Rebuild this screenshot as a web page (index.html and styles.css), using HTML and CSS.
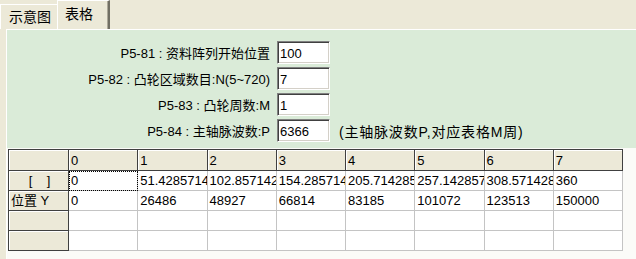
FILE: index.html
```html
<!DOCTYPE html>
<html lang="zh-CN">
<head>
  <meta charset="UTF-8">
  <title>凸轮表格</title>
  <link rel="stylesheet" href="styles.css">
</head>
<body>

  <div class="tabs">
    <div class="tab">示意图</div>
    <div class="tab active">表格</div>
  </div>

  <div class="panel">
    <div class="params">
      <label>P5-81 : 资料阵列开始位置</label>
      <input class="field" type="text" value="100">
      <span></span>

      <label>P5-82 : 凸轮区域数目:N(5~720)</label>
      <input class="field" type="text" value="7">
      <span></span>

      <label>P5-83 : 凸轮周数:M</label>
      <input class="field" type="text" value="1">
      <span></span>

      <label>P5-84 : 主轴脉波数:P</label>
      <input class="field" type="text" value="6366">
      <span class="note">(主轴脉波数P,对应表格M周)</span>
    </div>

    <div class="grid-area">
      <table class="grid">
        <colgroup>
          <col class="fixed-col">
          <col span="8">
        </colgroup>
        <tr class="head">
          <td class="fixed"></td>
          <td class="fixed">0</td>
          <td class="fixed">1</td>
          <td class="fixed">2</td>
          <td class="fixed">3</td>
          <td class="fixed">4</td>
          <td class="fixed">5</td>
          <td class="fixed">6</td>
          <td class="fixed">7</td>
        </tr>
        <tr>
          <td class="fixed center">[&nbsp;&nbsp;&nbsp;&nbsp;]</td>
          <td class="focus">0</td>
          <td>51.4285714</td>
          <td>102.857142</td>
          <td>154.285714</td>
          <td>205.714285</td>
          <td>257.142857</td>
          <td>308.571428</td>
          <td>360</td>
        </tr>
        <tr>
          <td class="fixed">位置 Y</td>
          <td>0</td>
          <td>26486</td>
          <td>48927</td>
          <td>66814</td>
          <td>83185</td>
          <td>101072</td>
          <td>123513</td>
          <td>150000</td>
        </tr>
        <tr>
          <td class="fixed"></td>
          <td></td><td></td><td></td><td></td><td></td><td></td><td></td><td></td>
        </tr>
        <tr>
          <td class="fixed"></td>
          <td></td><td></td><td></td><td></td><td></td><td></td><td></td><td></td>
        </tr>
      </table>
    </div>
  </div>

</body>
</html>
```

FILE: styles.css
```css
body {
  margin: 0;
  height: 259px;
  overflow: hidden;
  background-color: #ece9d8;
  font-family: "Liberation Sans", "Noto Sans CJK SC", sans-serif;
  font-size: 13px;
  color: #000;
}

/* tab strip */
.tabs {
  display: flex;
  align-items: flex-end;
  height: 29px;
}

.tab {
  box-sizing: border-box;
  height: 25px;
  width: 57px;
  padding: 2px 0 0 8px;
  font-size: 14px;
  line-height: 21px;
  border-top: 1px solid #fff;
  border-left: 1px solid #fff;
}

.tab.active {
  height: 29px;
  width: 53px;
  padding: 0 0 0 7px;
  line-height: 26px;
  border-right: 2px solid #716f64;
  box-shadow: inset -1px 0 #aca899;
}

/* page */
.panel {
  margin-left: 6px;
  border-left: 1px solid #fff;
  border-top: 1px solid #fff;
}

.params {
  display: grid;
  grid-template-columns: 263px 53px 1fr;
  grid-auto-rows: 23px;
  column-gap: 7px;
  row-gap: 3px;
  align-items: center;
  padding: 11px 0 6px;
  background-color: #daebd8;
}

.params label {
  text-align: right;
  white-space: nowrap;
}

.field {
  box-sizing: border-box;
  width: 53px;
  height: 23px;
  margin: 0;
  padding: 1px 2px 0;
  font: inherit;
  background-color: #fff;
  border-top: 1px solid #808080;
  border-left: 1px solid #808080;
  border-right: 1px solid #fff;
  border-bottom: 1px solid #fff;
  box-shadow: inset 1px 1px #404040, inset -1px -1px #d4d0c8;
  outline: none;
}

.note {
  padding-left: 2px;
  font-size: 14px;
  letter-spacing: 0.8px;
  white-space: nowrap;
}

/* grid */
.grid-area {
  height: 110px;
  padding: 1px 0 0 1px;
  background-color: #fbfbf8;
}

.grid {
  table-layout: fixed;
  width: 615px;
  border-collapse: separate;
  border-spacing: 0;
  border-top: 1px solid #404040;
  border-left: 1px solid #404040;
}

.grid .fixed-col {
  width: 60px;
}

.grid td {
  height: 19px;
  padding: 0 0 0 2px;
  overflow: hidden;
  white-space: nowrap;
  background-color: #fff;
  border-right: 1px solid #c4c4c4;
  border-bottom: 1px solid #c4c4c4;
  line-height: 19px;
}

.grid td.fixed {
  background-color: #ece9d8;
  border-right-color: #404040;
  border-bottom-color: #404040;
  box-shadow: inset 1px 1px #fff;
}

.grid .head td {
  height: 20px;
  border-bottom: 1px solid #404040;
}

.grid td.center {
  text-align: center;
}

.grid td.focus {
  outline: 1px dotted #000;
  outline-offset: -1px;
}
```
